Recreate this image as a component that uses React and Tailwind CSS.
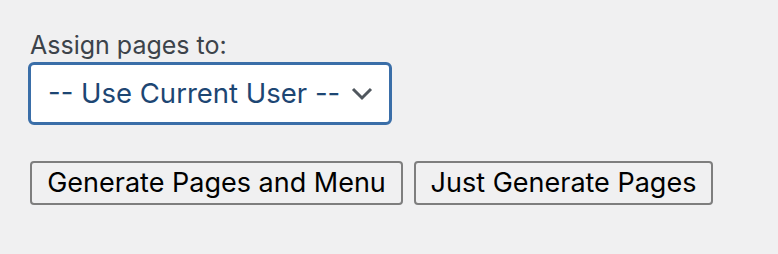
export default function App() {
  return (
    <div className="w-[778px] h-[254px] bg-[#f0f0f1] pl-[28px] pt-[28px]" style={{ fontFamily: 'Inter, "Liberation Sans", sans-serif' }}>
      <div className="text-[25px] leading-[34px] text-[#3c434a] pl-[2px]">Assign pages to:</div>
      <div className="w-[364px] h-[63px] rounded-[6px] border-[3px] border-[#3a6ea8] bg-white flex items-center justify-between pl-[17px] pr-[16px]">
        <span className="text-[27.5px] text-[#1d4673]">-- Use Current User --</span>
        <svg width="22" height="14" viewBox="0 0 22 14" fill="none">
          <path d="M2 2 L11 11 L20 2" stroke="#50575e" strokeWidth="3" />
        </svg>
      </div>
      <div className="flex gap-[11px] mt-[36px] pl-[2px]">
        <button className="h-[44px] w-[373px] rounded-[4px] border-2 border-[#7e7e7e] bg-[#f0f0f1] text-[27px] text-black">Generate Pages and Menu</button>
        <button className="h-[44px] w-[299px] rounded-[4px] border-2 border-[#7e7e7e] bg-[#f0f0f1] text-[27px] text-black">Just Generate Pages</button>
      </div>
    </div>
  );
}
